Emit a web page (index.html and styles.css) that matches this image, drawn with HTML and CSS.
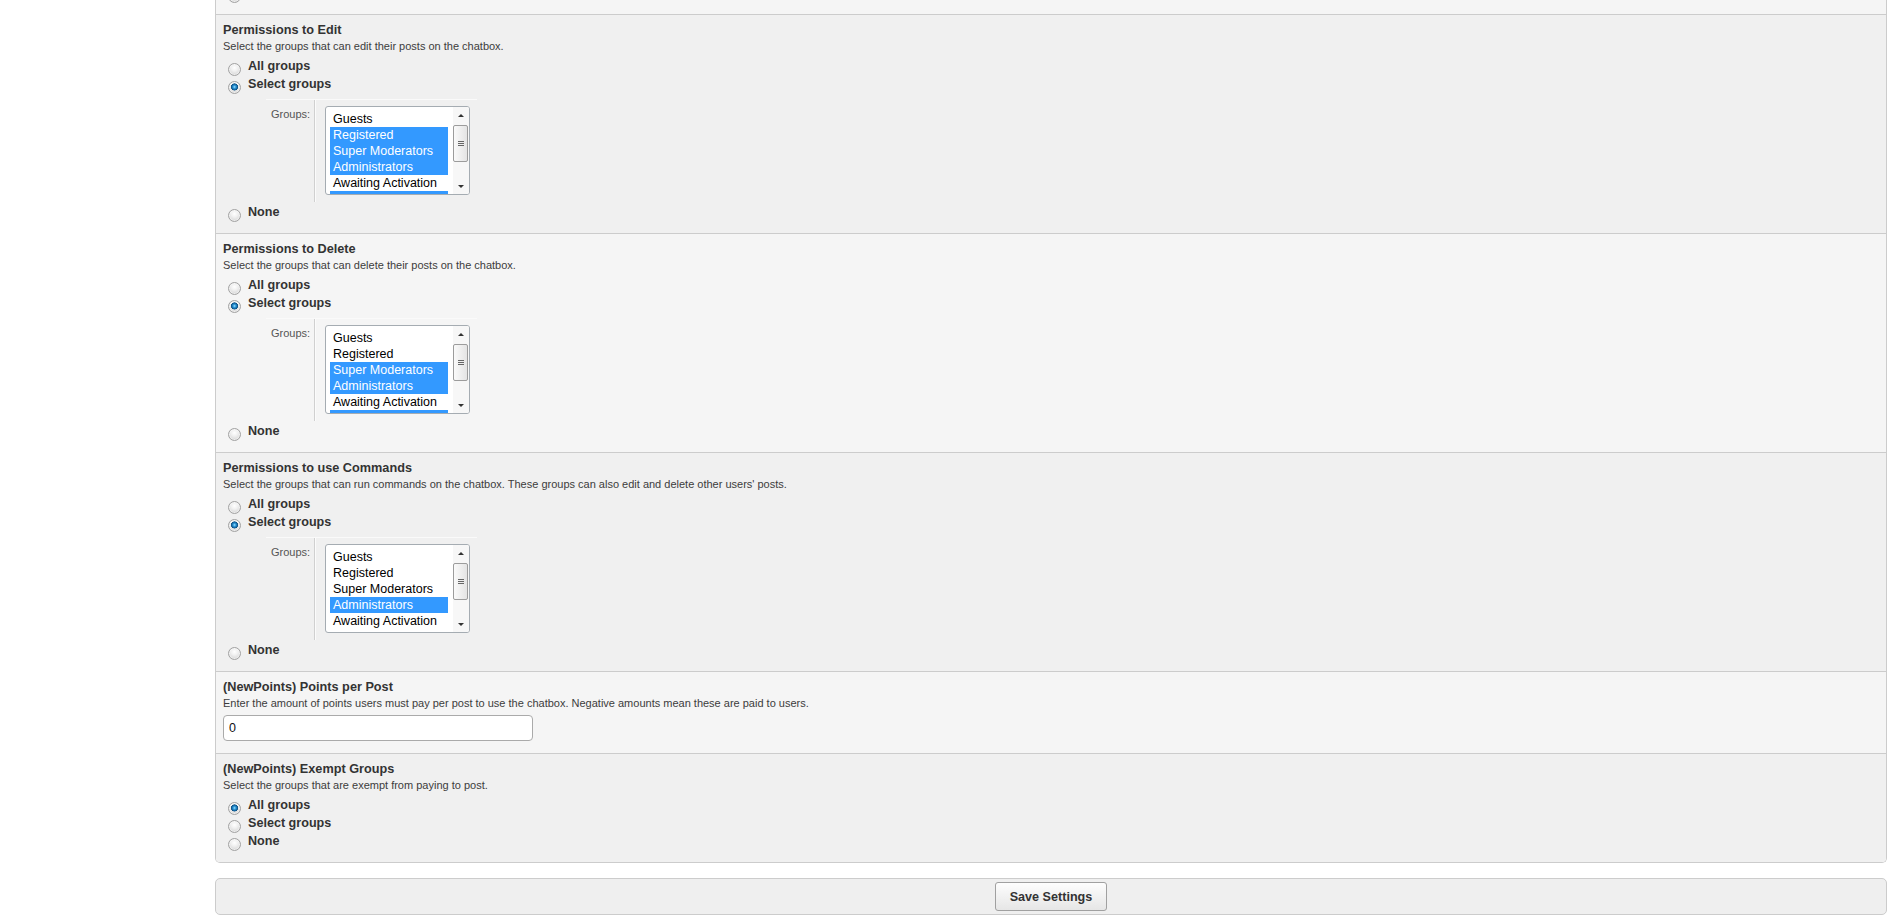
FILE: index.html
```html
<!DOCTYPE html>
<html lang="en">
<head>
<meta charset="utf-8">
<title>Chatbox Settings</title>
<link rel="stylesheet" href="styles.css">
</head>
<body>
<div class="layout">
  <aside class="sidebar"></aside>
  <main class="content">
    <form class="settings" onsubmit="return false;">
      <div class="form-container">

        <div class="row row-light row-clipped">
          <div class="radios">
            <label class="opt"><input type="radio" class="radio" name="prev" aria-label="None"></label>
          </div>
        </div>

        <div class="row row-dark">
          <div class="title">Permissions to Edit</div>
          <div class="desc">Select the groups that can edit their posts on the chatbox.</div>
          <div class="radios">
            <label class="opt"><input type="radio" class="radio" name="edit"><span>All groups</span></label>
            <label class="opt"><input type="radio" class="radio" name="edit" checked><span>Select groups</span></label>
          </div>
          <div class="group-select">
            <div class="gs-label">Groups:</div>
            <div class="gs-field">
              <div class="listbox">
                <ul class="options">
                  <li>Guests</li>
                  <li class="sel">Registered</li>
                  <li class="sel">Super Moderators</li>
                  <li class="sel">Administrators</li>
                  <li>Awaiting Activation</li>
                  <li class="sel">Moderators</li>
                </ul>
                <div class="scrollbar">
                  <div class="sb-btn"><span class="arrow-up"></span></div>
                  <div class="sb-track"><div class="sb-thumb"><span class="grip"></span></div></div>
                  <div class="sb-btn"><span class="arrow-down"></span></div>
                </div>
              </div>
            </div>
          </div>
          <div class="radios radios-after">
            <label class="opt"><input type="radio" class="radio" name="edit"><span>None</span></label>
          </div>
        </div>

        <div class="row row-light">
          <div class="title">Permissions to Delete</div>
          <div class="desc">Select the groups that can delete their posts on the chatbox.</div>
          <div class="radios">
            <label class="opt"><input type="radio" class="radio" name="delete"><span>All groups</span></label>
            <label class="opt"><input type="radio" class="radio" name="delete" checked><span>Select groups</span></label>
          </div>
          <div class="group-select">
            <div class="gs-label">Groups:</div>
            <div class="gs-field">
              <div class="listbox">
                <ul class="options">
                  <li>Guests</li>
                  <li>Registered</li>
                  <li class="sel">Super Moderators</li>
                  <li class="sel">Administrators</li>
                  <li>Awaiting Activation</li>
                  <li class="sel">Moderators</li>
                </ul>
                <div class="scrollbar">
                  <div class="sb-btn"><span class="arrow-up"></span></div>
                  <div class="sb-track"><div class="sb-thumb"><span class="grip"></span></div></div>
                  <div class="sb-btn"><span class="arrow-down"></span></div>
                </div>
              </div>
            </div>
          </div>
          <div class="radios radios-after">
            <label class="opt"><input type="radio" class="radio" name="delete"><span>None</span></label>
          </div>
        </div>

        <div class="row row-dark">
          <div class="title">Permissions to use Commands</div>
          <div class="desc">Select the groups that can run commands on the chatbox. These groups can also edit and delete other users' posts.</div>
          <div class="radios">
            <label class="opt"><input type="radio" class="radio" name="commands"><span>All groups</span></label>
            <label class="opt"><input type="radio" class="radio" name="commands" checked><span>Select groups</span></label>
          </div>
          <div class="group-select">
            <div class="gs-label">Groups:</div>
            <div class="gs-field">
              <div class="listbox">
                <ul class="options">
                  <li>Guests</li>
                  <li>Registered</li>
                  <li>Super Moderators</li>
                  <li class="sel">Administrators</li>
                  <li>Awaiting Activation</li>
                  <li>Moderators</li>
                </ul>
                <div class="scrollbar">
                  <div class="sb-btn"><span class="arrow-up"></span></div>
                  <div class="sb-track"><div class="sb-thumb"><span class="grip"></span></div></div>
                  <div class="sb-btn"><span class="arrow-down"></span></div>
                </div>
              </div>
            </div>
          </div>
          <div class="radios radios-after">
            <label class="opt"><input type="radio" class="radio" name="commands"><span>None</span></label>
          </div>
        </div>

        <div class="row row-light">
          <div class="title">(NewPoints) Points per Post</div>
          <div class="desc">Enter the amount of points users must pay per post to use the chatbox. Negative amounts mean these are paid to users.</div>
          <input type="text" class="text-input" value="0">
        </div>

        <div class="row row-dark">
          <div class="title">(NewPoints) Exempt Groups</div>
          <div class="desc">Select the groups that are exempt from paying to post.</div>
          <div class="radios">
            <label class="opt"><input type="radio" class="radio" name="exempt" checked><span>All groups</span></label>
            <label class="opt"><input type="radio" class="radio" name="exempt"><span>Select groups</span></label>
            <label class="opt"><input type="radio" class="radio" name="exempt"><span>None</span></label>
          </div>
        </div>

      </div>
      <div class="actions">
        <button type="submit" class="btn">Save Settings</button>
      </div>
    </form>
  </main>
</div>
</body>
</html>
```
FILE: styles.css
```css
* {
  box-sizing: border-box;
}

html, body {
  margin: 0;
  padding: 0;
  background: #ffffff;
}

body {
  font-family: "Liberation Sans", Arial, sans-serif;
  font-size: 11px;
  color: #333333;
}

.layout {
  display: flex;
  align-items: flex-start;
}

.sidebar {
  width: 215px;
  flex: none;
}

.content {
  flex: 1;
  min-width: 0;
  margin-right: 16px;
}

.settings {
  margin: 0;
}

.form-container {
  border: 1px solid #cccccc;
  border-top: 0;
  border-radius: 0 0 5px 5px;
  overflow: hidden;
}

.row {
  padding: 7px 7px 12px 7px;
  border-bottom: 1px solid #cccccc;
}

.row:last-child {
  border-bottom: 0;
}

.row-light {
  background: #f5f5f5;
}

.row-dark {
  background: #f0f0f0;
}

.row-clipped {
  height: 15px;
  padding-top: 0;
  overflow: hidden;
  display: flex;
  flex-direction: column;
  justify-content: flex-end;
}

.title {
  font-weight: bold;
  font-size: 12.7px;
  line-height: 17px;
  color: #333333;
}

.desc {
  font-size: 11px;
  line-height: 14px;
  color: #3c3c3c;
}

.radios {
  margin-top: 4px;
}

.row-clipped .radios {
  margin-top: 0;
  flex: none;
}

.radios-after {
  margin-top: 1px;
}

.opt {
  display: flex;
  align-items: flex-start;
  height: 18px;
  font-weight: bold;
  font-size: 12.6px;
  line-height: 18px;
  color: #333333;
}

.radio {
  -webkit-appearance: none;
  appearance: none;
  flex: none;
  width: 13px;
  height: 13px;
  margin: 6px 7px 0 5px;
  padding: 0;
  border-radius: 50%;
  border: 1px solid #a2a2a2;
  background: radial-gradient(circle at 50% 35%, #ffffff 0, #f1f1f1 35%, #d9d9d9 75%, #cfcfcf 100%);
  box-shadow: inset 0 0 0 1px rgba(255, 255, 255, 0.5);
  outline: none;
}

.radio:checked {
  background:
    radial-gradient(circle at 50% 45%, #a8e4ff 0, #3aa3e0 1.2px, #136aa8 2.6px, #0d4f80 3.3px, rgba(13, 79, 128, 0) 3.8px),
    radial-gradient(circle at 50% 35%, #ffffff 0, #f1f1f1 35%, #d9d9d9 75%, #cfcfcf 100%);
}

.group-select {
  display: flex;
  width: 211px;
  margin: 6px 0 0 43px;
  border-top: 1px solid #fafafa;
}

.gs-label {
  width: 49px;
  flex: none;
  padding: 7px 0 0 5px;
  font-size: 11px;
  line-height: 14px;
  color: #555555;
  border-right: 1px solid #d0d0d0;
}

.gs-field {
  flex: none;
  padding: 6px 7px 7px 9px;
  border-left: 1px solid #fbfbfb;
}

.listbox {
  display: flex;
  width: 145px;
  height: 89px;
  border: 1px solid #a5acb2;
  border-radius: 3px;
  background: #ffffff;
  overflow: hidden;
}

.options {
  list-style: none;
  margin: 0;
  padding: 4px 5px 0 4px;
  flex: 1;
  min-width: 0;
  overflow: hidden;
}

.options li {
  height: 16px;
  line-height: 16px;
  padding-left: 3px;
  font-size: 12.5px;
  color: #000000;
  white-space: nowrap;
  overflow: hidden;
}

.options li.sel {
  background: #3399ff;
  color: #ffffff;
}

.scrollbar {
  width: 16px;
  flex: none;
  display: flex;
  flex-direction: column;
  background: #f7f7f7;
}

.sb-btn {
  height: 16px;
  flex: none;
  display: flex;
  align-items: center;
  justify-content: center;
}

.arrow-up {
  width: 0;
  height: 0;
  border-left: 3px solid transparent;
  border-right: 3px solid transparent;
  border-bottom: 3px solid #333333;
}

.arrow-down {
  width: 0;
  height: 0;
  border-left: 3px solid transparent;
  border-right: 3px solid transparent;
  border-top: 3px solid #333333;
}

.sb-track {
  flex: 1;
}

.sb-thumb {
  height: 37px;
  margin: 2px 1px 0 0;
  border: 1px solid #9c9c9c;
  border-radius: 2px;
  background: linear-gradient(to right, #fafafa, #e4e4e4);
  display: flex;
  align-items: center;
  justify-content: center;
}

.grip {
  width: 6px;
  height: 5px;
  background: linear-gradient(#666 0, #666 1px, transparent 1px, transparent 2px, #666 2px, #666 3px, transparent 3px, transparent 4px, #666 4px, #666 5px);
}

.text-input {
  display: block;
  margin-top: 5px;
  width: 310px;
  height: 26px;
  padding: 0 5px;
  border: 1px solid #aaaaaa;
  border-radius: 4px;
  background: #ffffff;
  font-family: "Liberation Sans", Arial, sans-serif;
  font-size: 12.5px;
  color: #111111;
  outline: none;
}

.actions {
  margin-top: 15px;
  padding: 3px;
  border: 1px solid #cccccc;
  border-radius: 5px;
  background: #efefef;
  display: flex;
  justify-content: center;
}

.btn {
  height: 29px;
  padding: 0 14px;
  border: 1px solid #a0a0a0;
  border-radius: 3px;
  background: linear-gradient(#fdfdfd, #e6e6e6);
  font-family: "Liberation Sans", Arial, sans-serif;
  font-weight: bold;
  font-size: 12.6px;
  color: #333333;
  cursor: pointer;
}
```
